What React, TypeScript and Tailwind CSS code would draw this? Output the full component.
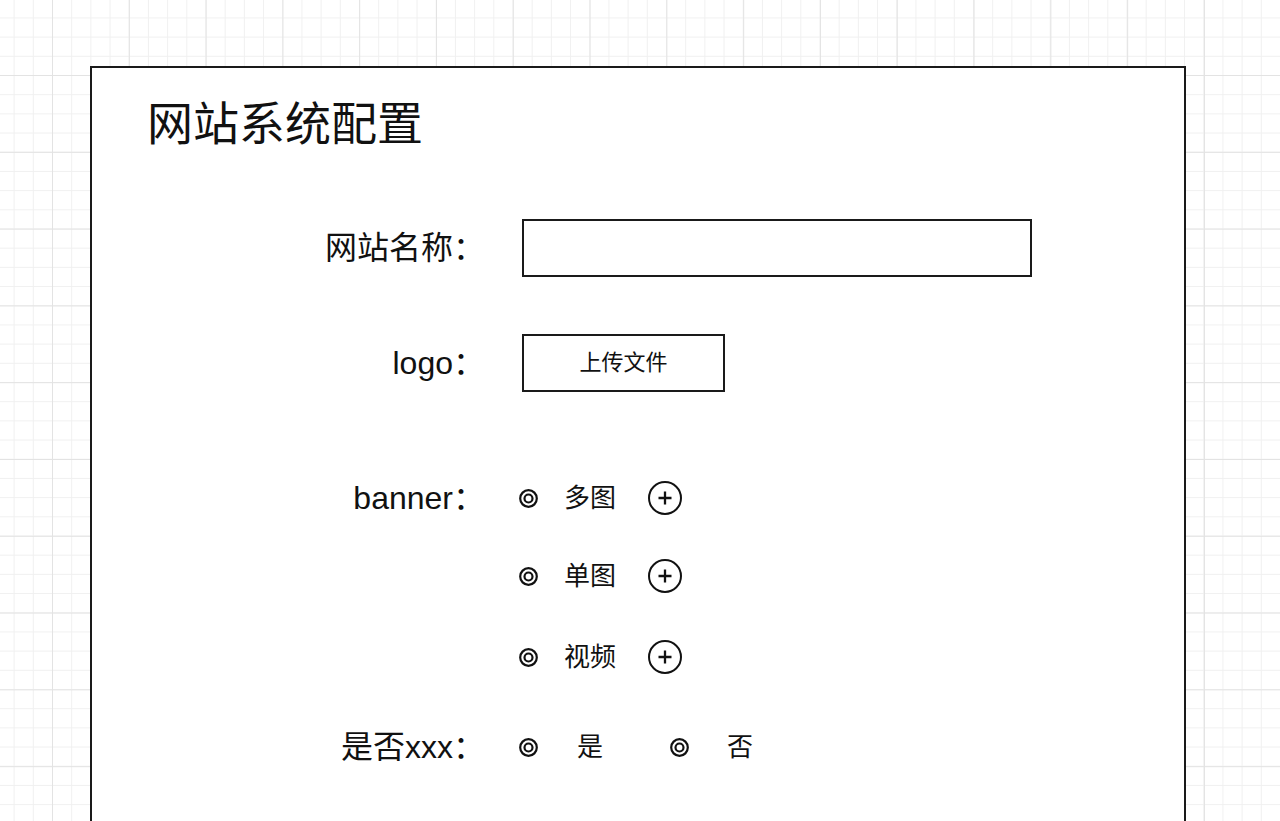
import React from 'react';

// 网站系统配置 — wireframe form on a grid canvas

const FONT = '"Liberation Sans", "Noto Sans CJK SC", sans-serif';

function RadioMark() {
  return (
    <svg width="19" height="19" viewBox="0 0 19 19" className="shrink-0">
      <circle cx="9.5" cy="9.5" r="8.3" fill="none" stroke="#111" strokeWidth="2.2" />
      <circle cx="9.5" cy="9.5" r="4" fill="none" stroke="#111" strokeWidth="2.2" />
    </svg>
  );
}

function PlusCircle() {
  return (
    <svg width="34" height="34" viewBox="0 0 34 34" className="shrink-0">
      <circle cx="17" cy="17" r="16" fill="none" stroke="#111" strokeWidth="2" />
      <path d="M17 10.5v13M10.5 17h13" stroke="#111" strokeWidth="2.3" />
    </svg>
  );
}

function Label({ children }: { children: React.ReactNode }) {
  return (
    <div className="w-[400px] shrink-0 pr-[7px] text-right text-[32px] leading-none text-[#111]">
      {children}
    </div>
  );
}

function BannerOption({ text, className }: { text: string; className?: string }) {
  return (
    <div className={`flex h-[34px] items-center ${className ?? ''}`}>
      <div className="-ml-[3px] flex items-center">
        <RadioMark />
      </div>
      <span className="ml-[26px] text-[26px] leading-none text-[#111]">{text}</span>
      <div className="ml-[32px]">
        <PlusCircle />
      </div>
    </div>
  );
}

export default function App() {
  return (
    <div
      className="h-[821px] w-full overflow-hidden bg-white [background-image:linear-gradient(to_right,#e3e3e3_1px,transparent_1px),linear-gradient(to_bottom,#e3e3e3_1px,transparent_1px),linear-gradient(to_right,#f0f0f0_1px,transparent_1px),linear-gradient(to_bottom,#f0f0f0_1px,transparent_1px)] [background-position:52px_75px,52px_75px,52px_75px,52px_75px] [background-size:76.8px_76.8px,76.8px_76.8px,19.2px_19.2px,19.2px_19.2px]"
      style={{ fontFamily: FONT }}
    >
      <div className="ml-[90px] pt-[66px]">
        <div className="h-[800px] w-[1096px] border-2 border-[#1a1a1a] bg-white">
          <h1 className="pl-[55px] pt-[33px] text-[46px] leading-none font-normal text-[#111]">
            网站系统配置
          </h1>

          {/* 网站名称 */}
          <div className="mt-[72px] flex h-[58px] items-center">
            <Label>网站名称：</Label>
            <div className="ml-[30px] h-[58px] w-[510px] border-2 border-[#1a1a1a] bg-white" />
          </div>

          {/* logo */}
          <div className="mt-[57px] flex h-[58px] items-center">
            <Label>logo：</Label>
            <button
              type="button"
              className="ml-[30px] flex h-[58px] w-[203px] items-center justify-center border-2 border-[#1a1a1a] bg-white text-[22px] leading-none text-[#111]"
            >
              上传文件
            </button>
          </div>

          {/* banner */}
          <div className="mt-[89px] flex items-start">
            <div className="flex h-[34px] items-center">
              <Label>banner：</Label>
            </div>
            <div className="ml-[30px] flex flex-col">
              <BannerOption text="多图" />
              <BannerOption text="单图" className="mt-[44px]" />
              <BannerOption text="视频" className="mt-[47px]" />
            </div>
          </div>

          {/* 是否xxx */}
          <div className="mt-[56px] flex h-[34px] items-center">
            <Label>是否xxx：</Label>
            <div className="ml-[30px] flex items-center">
              <div className="-ml-[3px] flex items-center">
                <RadioMark />
              </div>
              <span className="ml-[39px] text-[26px] leading-none text-[#111]">是</span>
              <div className="ml-[67px] flex items-center">
                <RadioMark />
              </div>
              <span className="ml-[38px] text-[26px] leading-none text-[#111]">否</span>
            </div>
          </div>
        </div>
      </div>
    </div>
  );
}
